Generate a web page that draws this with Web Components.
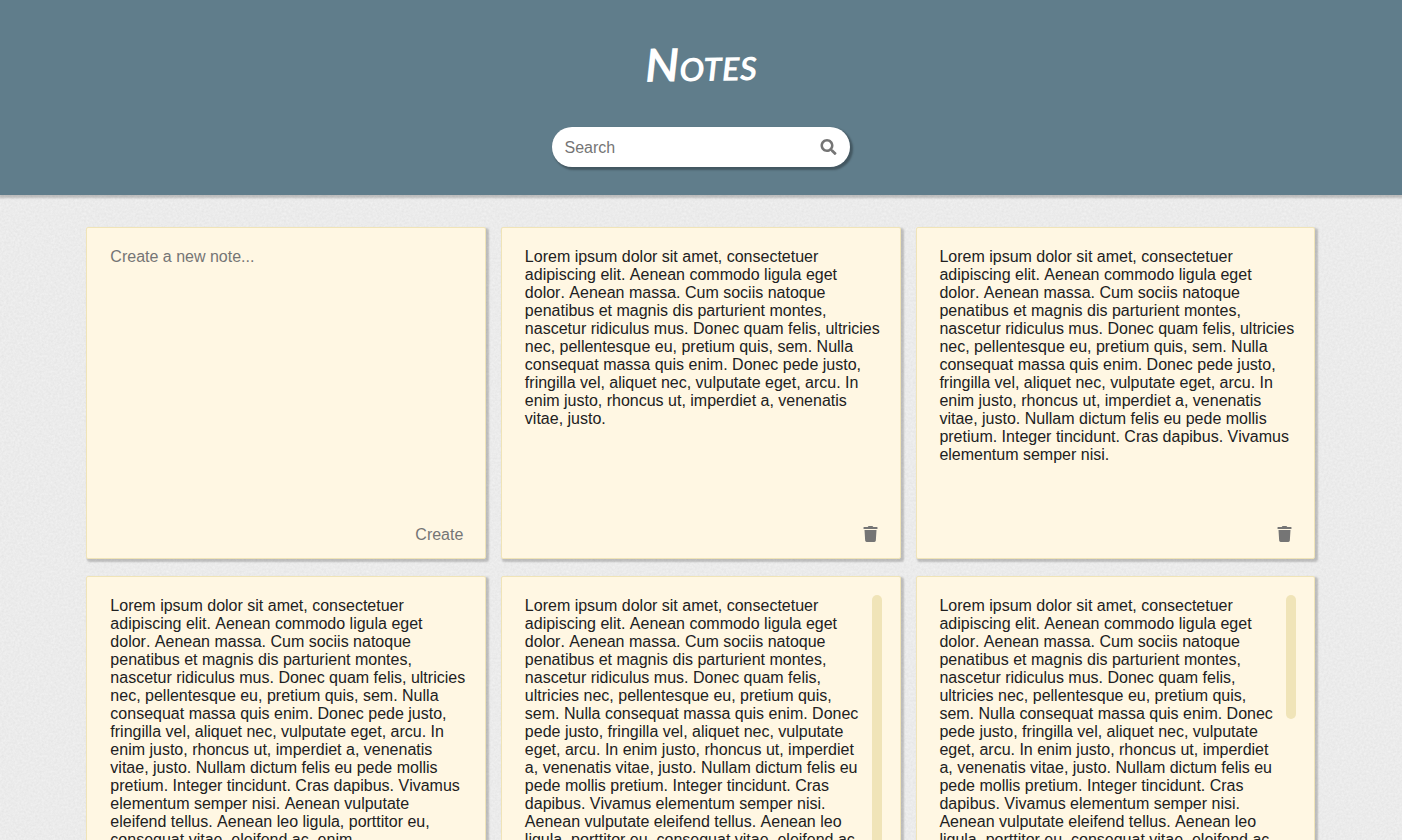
<!DOCTYPE html>
<html lang="en">
<head>
<meta charset="utf-8">
<title>Notes</title>
<style>
html,body{margin:0;height:840px;overflow:hidden}
body{font:16px/18px "Liberation Sans",Arial,sans-serif;color:#212121;background-color:#ebebeb;
background-image:url("data:image/svg+xml,%3Csvg xmlns='http://www.w3.org/2000/svg' width='200' height='200'%3E%3Cfilter id='n' x='0' y='0' width='1' height='1' color-interpolation-filters='sRGB'%3E%3CfeTurbulence type='fractalNoise' baseFrequency='.45' numOctaves='3' stitchTiles='stitch'/%3E%3CfeColorMatrix values='.06 0 0 0 .892 .06 0 0 0 .892 .06 0 0 0 .892 0 0 0 0 1'/%3E%3C/filter%3E%3Crect width='200' height='200' filter='url(%23n)'/%3E%3C/svg%3E")}
</style>
</head>
<body>
<notes-app></notes-app>
<script>
const define = (name, html, setup) => {
  const template = document.createElement('template');
  template.innerHTML = html;
  customElements.define(name, class extends HTMLElement {
    constructor() {
      super();
      this.attachShadow({mode: 'open'}).append(template.content.cloneNode(true));
    }
    connectedCallback() { if (setup) setup(this, this.shadowRoot); }
  });
};

define('search-box', `
<style>
:host{display:flex;align-items:center;justify-content:space-between;box-sizing:border-box;width:298px;height:40px;padding:0 13.500px 0 12.500px;border-radius:20px;background:#fff;color:#757575;box-shadow:2px 2px 2px 1px rgba(0,0,0,.3)}
span{padding-top:2px}
svg{display:block;width:17px;height:16px}
</style>
<span>Search</span>
<svg viewBox="0 0 544 512" fill="#757575"><path d="M505 442.700 405.300 343c-4.500-4.500-10.600-7-17-7H372c27.600-35.300 44-79.700 44-128C416 93.100 322.900 0 208 0S0 93.100 0 208s93.100 208 208 208c48.300 0 92.700-16.400 128-44v16.300c0 6.400 2.500 12.500 7 17l99.700 99.700c9.400 9.400 24.600 9.400 33.900 0l28.300-28.300c9.400-9.400 9.400-24.600.1-34zM208 336c-70.700 0-128-57.200-128-128 0-70.700 57.200-128 128-128 70.700 0 128 57.200 128 128 0 70.700-57.200 128-128 128z" transform="translate(16 0)"/></svg>`);

define('app-header', `
<style>
:host{display:flex;flex-direction:column;align-items:center;box-sizing:border-box;height:195px;padding-top:36px;background:#607d8b;box-shadow:0 2px 2px 1px rgba(0,0,0,.2)}
h1{margin:0 0 35px;height:56px;font:italic 700 46px/56px Lato,"Open Sans",sans-serif;font-variant-caps:small-caps;color:#fff;transform:rotate(-1deg) scaleX(1.04)}
</style>
<h1>Notes</h1>
<search-box></search-box>`);

define('trash-icon', `
<style>:host,svg{display:block}svg{width:15px;height:16px}</style>
<svg viewBox="0 0 480 512" fill="#757575"><path d="M432 32H312l-9.400-18.700A24 24 0 0 0 281.100 0H166.800a23.700 23.700 0 0 0-21.400 13.300L136 32H16A16 16 0 0 0 0 48v32a16 16 0 0 0 16 16h416a16 16 0 0 0 16-16V48a16 16 0 0 0-16-16zM32 128l21.200 339a48 48 0 0 0 47.900 45h245.800a48 48 0 0 0 47.900-45L416 128z" transform="translate(16 0)"/></svg>`);

define('note-card', `
<style>
:host{display:flex;flex-direction:column;box-sizing:border-box;width:399.700px;height:332px;padding:18px 18px 6px 21.700px;border:1px solid #f0e4b8;border-radius:2px;background:#fff7e3;box-shadow:2px 2px 2px 1px rgba(0,0,0,.2)}
.body{display:flex;height:264px;overflow:hidden}
.text{flex:1;padding:2px 0 2px 1.200px;white-space:pre-wrap;font-kerning:none;overflow:hidden}
.bar{display:none;width:10px;border-radius:5px;background:#f0e4b8}
:host([thumb]) .bar{display:block}
footer{display:flex;justify-content:flex-end;align-items:center;height:32px;margin-top:8px;padding-right:3.800px;color:#757575}
:host([draft]) .text{color:#757575}
:host([draft]) footer{padding-right:3.800px;margin-top:9px}
</style>
<div class="body"><div class="text"><slot></slot></div><div class="bar"></div></div>
<footer><slot name="action"><trash-icon></trash-icon></slot></footer>`,
(host, root) => { root.querySelector('.bar').style.height = (host.getAttribute('thumb') || 0) + 'px'; });

define('note-grid', `
<style>:host{display:grid;grid-template-columns:repeat(3,399.700px);gap:17px 14.830px;justify-content:center;padding-top:32px;margin-left:-.350px}</style>
<slot></slot>`);

const head = `Lorem ipsum dolor sit amet, consectetuer
adipiscing elit. Aenean commodo ligula eget
dolor. Aenean massa. Cum sociis natoque
penatibus et magnis dis parturient montes,
`;
const wide = head + `nascetur ridiculus mus. Donec quam felis, ultricies
nec, pellentesque eu, pretium quis, sem. Nulla
consequat massa quis enim. Donec pede justo,
fringilla vel, aliquet nec, vulputate eget, arcu. In
enim justo, rhoncus ut, imperdiet a, venenatis
vitae, justo.`;
const medium = wide + ` Nullam dictum felis eu pede mollis
pretium. Integer tincidunt. Cras dapibus. Vivamus
elementum semper nisi.`;
const full = medium + ` Aenean vulputate
eleifend tellus. Aenean leo ligula, porttitor eu,
consequat vitae, eleifend ac, enim.`;
const narrow = head + `nascetur ridiculus mus. Donec quam felis,
ultricies nec, pellentesque eu, pretium quis,
sem. Nulla consequat massa quis enim. Donec
pede justo, fringilla vel, aliquet nec, vulputate
eget, arcu. In enim justo, rhoncus ut, imperdiet
a, venenatis vitae, justo. Nullam dictum felis eu
pede mollis pretium. Integer tincidunt. Cras
dapibus. Vivamus elementum semper nisi.
Aenean vulputate eleifend tellus. Aenean leo
ligula, porttitor eu, consequat vitae, eleifend ac,`;

define('notes-app', `
<style>:host{display:block}</style>
<app-header></app-header>
<note-grid>
<note-card draft>Create a new note...<span slot="action">Create</span></note-card>
<note-card>${wide}</note-card>
<note-card>${medium}</note-card>
<note-card>${full}</note-card>
<note-card thumb="250">${narrow}</note-card>
<note-card thumb="124">${narrow}</note-card>
</note-grid>`);
</script>
</body>
</html>
